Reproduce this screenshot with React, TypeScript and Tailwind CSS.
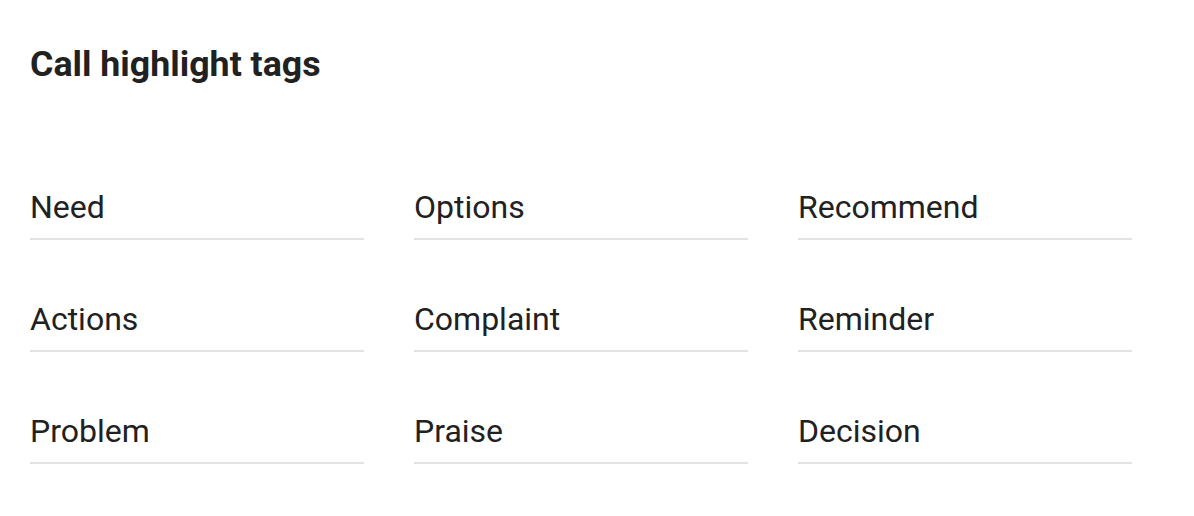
const tags = [
  'Need',
  'Options',
  'Recommend',
  'Actions',
  'Complaint',
  'Reminder',
  'Problem',
  'Praise',
  'Decision',
];

export default function App() {
  return (
    <div className="min-h-[516px] bg-white px-[30px] pt-[44px] font-['Roboto',sans-serif] text-[#212121]">
      <h1 className="text-[35.75px] leading-[40px] font-bold">Call highlight tags</h1>
      <div className="mt-[103px] grid w-[1102px] grid-cols-3 gap-x-[50px] gap-y-[59px]">
        {tags.map((tag) => (
          <div key={tag} className="border-b-2 border-[#e2e2e2] pb-[11px] text-[32px] leading-[40px]">
            {tag}
          </div>
        ))}
      </div>
    </div>
  );
}
